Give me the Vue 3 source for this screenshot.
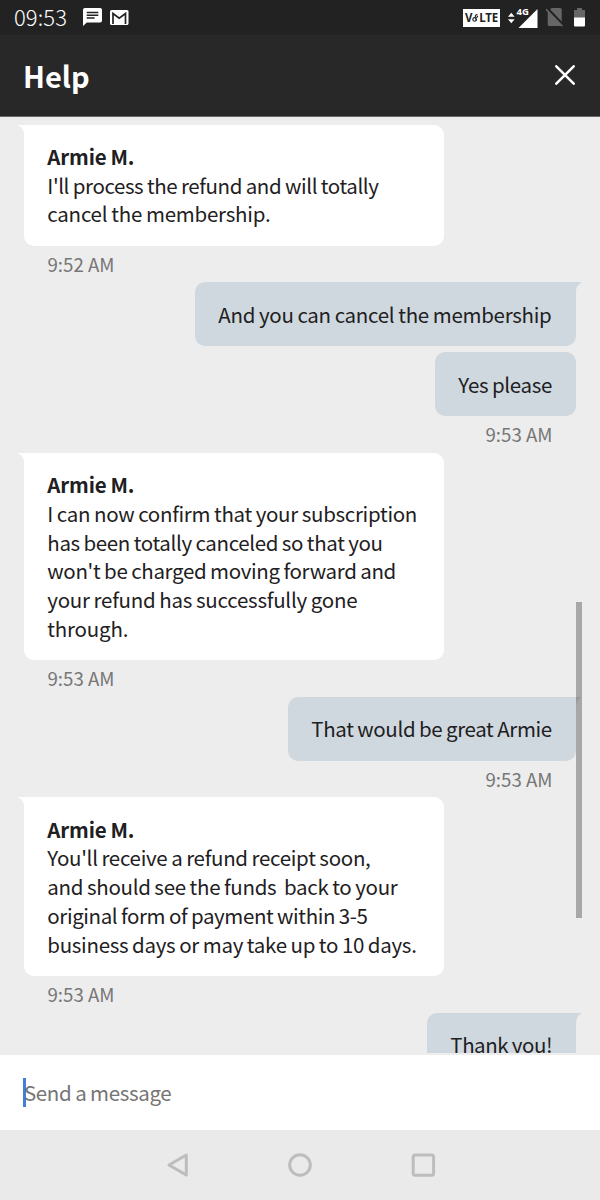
<script setup>
const groups = [
  {
    side: 'agent', time: '9:52 AM',
    bubbles: [{ name: 'Armie M.', lines: [["I'll process the refund and will totally", -0.4], ['cancel the membership.', -0.23]] }],
  },
  {
    side: 'me', time: '9:53 AM',
    bubbles: [{ lines: [['And you can cancel the membership', -0.28]], width: 381 }, { lines: [['Yes please', -0.33]], width: 141 }],
  },
  {
    side: 'agent', time: '9:53 AM',
    bubbles: [{
      name: 'Armie M.',
      lines: [['I can now confirm that your subscription', -0.3], ['has been totally canceled so that you', -0.36], ["won't be charged moving forward and", -0.34], ['your refund has successfully gone', -0.25], ['through.', -0.2]],
    }],
  },
  { side: 'me', time: '9:53 AM', bubbles: [{ lines: [['That would be great Armie', -0.36]], width: 288 }] },
  {
    side: 'agent', time: '9:53 AM',
    bubbles: [{
      name: 'Armie M.',
      lines: [["You'll receive a refund receipt soon,", -0.3], ['and should see the funds\u00a0 back to your', -0.3], ['original form of payment within 3-5', -0.39], ['business days or may take up to 10 days.', -0.3]],
    }],
  },
  { side: 'me', bubbles: [{ lines: [['Thank you!', -0.45]], width: 149 }] },
]
</script>

<template>
  <div class="phone">
    <div class="status">
      <span class="clock">09:53</span>
      <svg class="sms" width="19" height="18" viewBox="0 0 18 18" preserveAspectRatio="none">
        <path fill="#fff" d="M1.8 0h14.4Q18 0 18 1.8v11Q18 14.500 16.200 14.500H3.600L0 18V1.800Q0 0 1.800 0z" />
        <path stroke="#222" stroke-width="1.5" d="M3.500 4.400h11M3.500 7.200h11M3.500 10h7.500" />
      </svg>
      <svg class="mail" width="19" height="15" viewBox="0 0 19 15">
        <rect width="18.500" height="15" rx="1.600" fill="#fff" />
        <path d="M3 14V3.500l6.200 4.700 6.300-4.700V14" fill="none" stroke="#222" stroke-width="1.700" />
      </svg>
      <span class="grow"></span>
      <span class="volte">V<svg width="7" height="10" viewBox="0 0 8 10"><g fill="none" stroke="#222" stroke-width="1.300"><ellipse cx="2.800" cy="6.600" rx="1.800" ry="2.100" /><path d="M3.800 3.800Q3.500 1 6.200 1.200M4.200 4.500Q7.500 4 6 2.500M5 5.500v2.500" /></g></svg>LTE</span>
      <svg class="signal" width="31" height="24" viewBox="0 0 31 24">
        <path fill="#fff" d="M0 9.700l3.300-4 3.300 4zM0 12.300h6.600l-3.300 4zM29.500 2v19H10.500z" />
        <text x="8.500" y="8" fill="#fff">4G</text>
      </svg>
      <svg class="sim" width="18" height="20" viewBox="0 0 18 20">
        <path fill="#666" d="M5.500 0h8.700Q15.700 0 15.700 1.500V18H3.200Q1.700 18 1.700 16.500V4z" />
        <path d="M1 -.3l17 18" stroke="#222" stroke-width="2.200" />
        <path d="M-.2 1l16.700 17.200" stroke="#666" stroke-width="1.500" />
      </svg>
      <svg class="battery" width="11" height="19" viewBox="0 0 11 19">
        <path fill="#666" d="M3 0h5v2h3v8H0V2h3z" /><path fill="#fff" d="M0 9.500h11v8Q11 18.500 10 18.500H1Q0 18.500 0 17.500z" />
      </svg>
    </div>
    <header class="header">
      <h1>Help</h1>
      <svg width="20" height="20" viewBox="0 0 20 20"><path d="M1.300 1.300l17.400 17.400M18.700 1.300L1.300 18.700" stroke="#fff" stroke-width="2.500" stroke-linecap="round" /></svg>
    </header>
    <main class="chat">
      <section v-for="(g, i) in groups" :key="i" class="group" :class="g.side">
        <div v-for="(b, j) in g.bubbles" :key="j" class="bubble" :style="b.width ? { width: b.width + 'px' } : {}">
          <svg v-if="j === 0" class="tail" width="8" height="12" viewBox="0 0 8 12"><path d="M0 0H8V12H6.100Q6.500 3 0 0z" /></svg>
          <strong v-if="b.name">{{ b.name }}</strong>
          <p v-for="[text, tracking] in b.lines" :key="text" :style="{ letterSpacing: tracking + 'px' }">{{ text }}</p>
        </div>
        <time v-if="g.time">{{ g.time }}</time>
      </section>
      <div class="thumb"></div>
    </main>
    <div class="composer"><span class="caret"></span><span class="placeholder">Send a message</span></div>
    <nav class="nav">
      <svg width="270" height="26" viewBox="0 0 270 26" fill="none" stroke="#bdbdbd" stroke-width="3" stroke-linejoin="round">
        <path d="M20.300 3v20L3 13z" />
        <circle cx="134" cy="13" r="10.300" />
        <rect x="247.200" y="3" width="20.400" height="20.300" rx="2" />
      </svg>
    </nav>
  </div>
</template>

<style>
body { margin: 0; }
</style>

<style scoped>
.phone { width: 600px; height: 1200px; display: flex; flex-direction: column; overflow: hidden; background: #ededed; color: #1e2022; font-family: "Noto Sans CJK SC", "Noto Sans", sans-serif; }
.status { height: 35px; flex: none; display: flex; align-items: center; box-sizing: border-box; padding: 0 15.500px 0 14px; background: #222; color: #fff; }
.clock { width: 68px; margin-top: -2px; font-size: 22px; line-height: 35px; letter-spacing: .1px; font-weight: 300; }
.sms { margin-left: 1px; margin-top: -1px; }
.mail { margin-left: 8px; }
.grow { flex: 1; }
.volte { display: flex; align-items: center; justify-content: center; width: 37px; height: 18px; margin-right: 8px; background: #fff; color: #222; font: bold 11.500px/18px "Noto Sans", sans-serif; letter-spacing: -.2px; }
.signal { margin: -1px 6.500px 0 0; padding-top: 4px; overflow: visible; }
.signal text { font: bold 9.500px "Noto Sans", sans-serif; }
.sim { margin-right: 10px; }
.header { height: 82px; flex: none; display: flex; align-items: center; justify-content: space-between; box-sizing: border-box; padding: 0 25px 1px 23px; background: #282828; border-bottom: 1px solid #666; color: #fff; }
h1 { margin: 0; font-size: 29px; font-weight: 700; line-height: 40px; }
.chat { position: relative; height: 936px; flex: none; box-sizing: border-box; padding: 7.500px 24px 0; overflow: hidden; }
.group { display: flex; flex-direction: column; align-items: flex-start; }
.group.me { align-items: flex-end; }
.bubble { position: relative; box-sizing: border-box; width: 420px; padding: 17.400px 23.300px 17.500px; border-radius: 10px; background: #fff; line-height: 28.750px; font-size: 20.500px; white-space: nowrap; word-spacing: -.5px; }
.bubble + .bubble { margin-top: 6.500px; }
.me .bubble { background: #cfd8de; }
.agent .bubble:first-child { border-top-left-radius: 0; }
.me .bubble:first-child { border-top-right-radius: 0; }
.bubble strong { display: block; font-weight: 700; letter-spacing: -.15px; }
.bubble p { margin: 0; }
.tail { position: absolute; left: -6px; top: 0; fill: #fff; }
.me .tail { left: auto; right: -6px; transform: scaleX(-1); fill: #cfd8de; }
time { height: 36.700px; padding: 0 23.500px; box-sizing: border-box; color: #777; font-size: 18.700px; line-height: 35.500px; }
.thumb { position: absolute; left: 576px; top: 485px; width: 6px; height: 316px; background: rgba(0, 0, 0, .29); }
.composer { height: 75px; margin-top: 2px; flex: none; display: flex; align-items: center; padding-left: 23px; background: #fff; }
.caret { width: 3px; height: 29px; background: #437fd6; }
.placeholder { margin: -2px 0 0 -2px; font-size: 20.500px; letter-spacing: -.35px; word-spacing: -.5px; color: #757575; }
.nav { flex: 1; display: flex; justify-content: center; align-items: center; padding-left: 2px; background: #eaeaea; }
</style>
